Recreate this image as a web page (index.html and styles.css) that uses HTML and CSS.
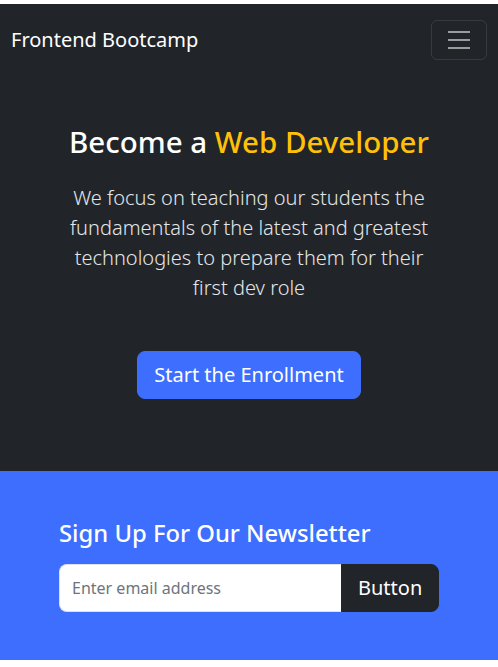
FILE: index.html
```html
<!DOCTYPE html>
<html lang="en">
<head>
<meta charset="utf-8">
<meta name="viewport" content="width=device-width, initial-scale=1">
<title>Frontend Bootcamp</title>
<link rel="stylesheet" href="styles.css">
</head>
<body>
<div class="page">
  <nav class="navbar">
    <a class="brand" href="#">Frontend Bootcamp</a>
    <button class="toggler" type="button" aria-label="Toggle navigation">
      <svg class="toggler-icon" viewBox="0 0 30 30" width="30" height="30" aria-hidden="true">
        <path d="M4 7h22M4 15h22M4 23h22" stroke="rgba(255,255,255,0.55)" stroke-width="2" stroke-linecap="butt" fill="none"/>
      </svg>
    </button>
  </nav>
  <section class="hero">
    <h1 class="hero-title">Become a <span class="accent">Web Developer</span></h1>
    <p class="lead">We focus on teaching our students the fundamentals of the latest and greatest technologies to prepare them for their first dev role</p>
    <button class="btn-primary" type="button">Start the Enrollment</button>
  </section>
  <section class="newsletter">
    <div class="newsletter-inner">
      <h3 class="newsletter-title">Sign Up For Our Newsletter</h3>
      <div class="input-group">
        <input class="email" type="text" placeholder="Enter email address">
        <button class="btn-dark" type="button">Button</button>
      </div>
    </div>
  </section>
</div>
</body>
</html>
```
FILE: styles.css
```css
* { box-sizing: border-box; }
html, body { margin: 0; padding: 0; background: #fff; }
body {
  font-family: "Noto Sans", "Open Sans", "DejaVu Sans", sans-serif;
  font-size: 16px;
  line-height: 1.5;
  color: #212529;
}
.page { padding-top: 4px; }

.navbar {
  background: #212529;
  display: flex;
  align-items: center;
  justify-content: space-between;
  padding: 16px 11px 16px 11px;
}
.brand {
  color: #fff;
  text-decoration: none;
  font-size: 20px;
  line-height: 30px;
  padding: 5px 0;
}
.toggler {
  width: 56px;
  height: 40px;
  padding: 4px 12px;
  background: transparent;
  border: 1px solid rgba(255,255,255,0.1);
  border-radius: 6px;
  display: flex;
  align-items: center;
  justify-content: center;
}
.toggler-icon { display: block; }

.hero {
  background: #212529;
  text-align: center;
  padding: 48px 24px 72px;
  display: flex;
  flex-direction: column;
  align-items: center;
}
.hero-title {
  margin: 0 0 24px;
  font-size: 29.5px;
  line-height: 1.2;
  font-weight: 500;
  color: #fff;
}
.accent { color: #ffc107; }
.lead {
  margin: 0 0 48px;
  font-family: "Noto Sans Light", "Noto Sans", "Open Sans", sans-serif;
  font-size: 20px;
  line-height: 30px;
  font-weight: 300;
  color: #e4e6e8;
  max-width: 370px;
}
.btn-primary {
  font-family: inherit;
  font-size: 20px;
  line-height: 30px;
  padding: 8px 16px;
  color: #fff;
  background: #3d6efe;
  border: 1px solid #3d6efe;
  border-radius: 8px;
  width: 224px;
}

.newsletter {
  background: #3d6efe;
  padding: 48px 59px 48px;
}
.newsletter-title {
  margin: 0 0 16px;
  font-size: 23.8px;
  line-height: 1.2;
  font-weight: 500;
  color: #fff;
}
.input-group {
  display: flex;
  height: 48px;
}
.email {
  flex: 1;
  min-width: 0;
  font-family: inherit;
  font-size: 16px;
  padding: 0 12px;
  border: 1px solid #dee2e6;
  border-right: 0;
  border-radius: 8px 0 0 8px;
  background: #fff;
  color: #212529;
  outline: none;
}
.email::placeholder { color: #6c757d; opacity: 1; }
.btn-dark {
  font-family: inherit;
  font-size: 20px;
  line-height: 30px;
  padding: 8px 16px;
  width: 98px;
  color: #fff;
  background: #212529;
  border: 1px solid #212529;
  border-radius: 0 8px 8px 0;
}
```
